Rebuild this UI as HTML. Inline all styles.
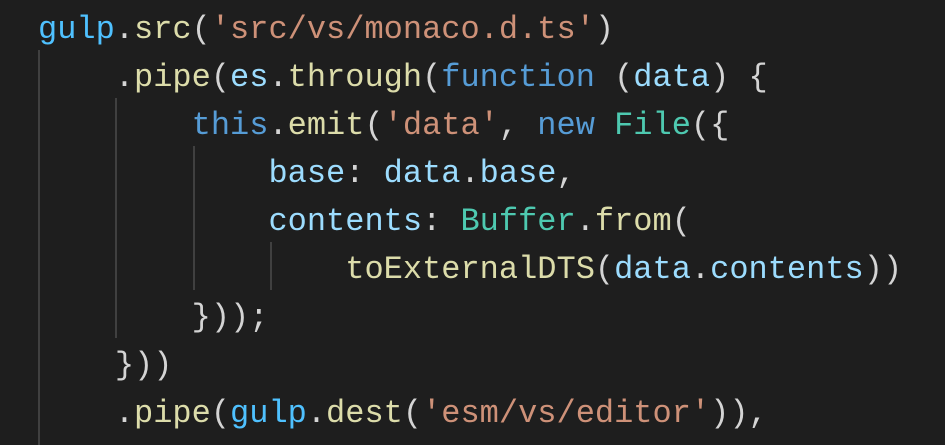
<!DOCTYPE html>
<html><head><style>
body{margin:0;background:#1e1e1e;width:945px;height:445px;overflow:hidden;position:relative}
pre{margin:0;position:absolute;left:38px;top:6px;font-family:"Liberation Mono",monospace;font-size:32px;line-height:48px;color:#d4d4d4}
.v{color:#9cdcfe}.g{color:#4fc1ff}.f{color:#dcdcaa}.s{color:#ce9178}.k{color:#569cd6}.c{color:#4ec9b0}
.gd{position:absolute;width:2px;background:#404040}
</style></head><body>
<div class="gd" style="left:38px;top:50px;height:395px"></div>
<div class="gd" style="left:115px;top:98px;height:240px"></div>
<div class="gd" style="left:193px;top:146px;height:144px"></div>
<div class="gd" style="left:270px;top:242px;height:48px"></div>
<pre><span class="g">gulp</span>.<span class="f">src</span>(<span class="s">'src/vs/monaco.d.ts'</span>)
    .<span class="f">pipe</span>(<span class="v">es</span>.<span class="f">through</span>(<span class="k">function</span> (<span class="v">data</span>) {
        <span class="k">this</span>.<span class="f">emit</span>(<span class="s">'data'</span>, <span class="k">new</span> <span class="c">File</span>({
            <span class="v">base</span>: <span class="v">data</span>.<span class="v">base</span>,
            <span class="v">contents</span>: <span class="c">Buffer</span>.<span class="f">from</span>(
                <span class="f">toExternalDTS</span>(<span class="v">data</span>.<span class="v">contents</span>))
        }));
    }))
    .<span class="f">pipe</span>(<span class="g">gulp</span>.<span class="f">dest</span>(<span class="s">'esm/vs/editor'</span>)),</pre>
</body></html>
